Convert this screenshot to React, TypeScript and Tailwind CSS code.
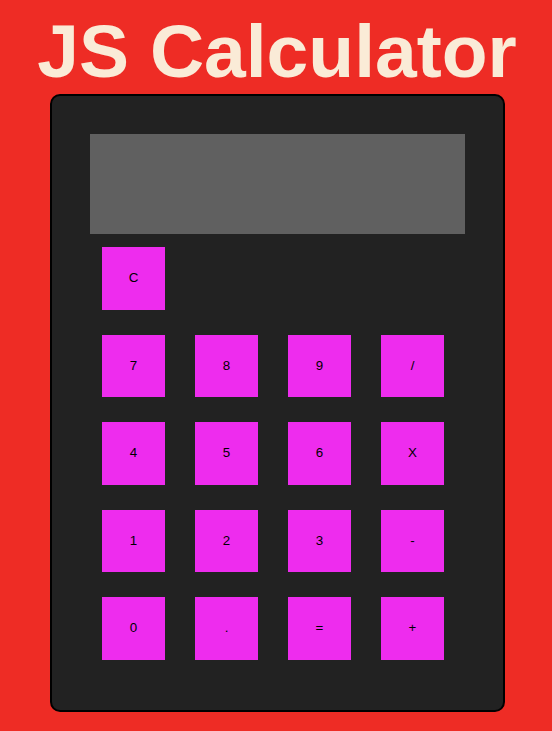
const rows: string[][] = [
  ["C"],
  ["7", "8", "9", "/"],
  ["4", "5", "6", "X"],
  ["1", "2", "3", "-"],
  ["0", ".", "=", "+"],
];

function Key({ label }: { label: string }) {
  return (
    <button
      type="button"
      className="w-[63px] h-[62.5px] bg-[#ee2cee] text-black text-[13.33px] font-['Liberation_Sans',Arial,sans-serif] flex items-center justify-center"
    >
      {label}
    </button>
  );
}

export default function App() {
  return (
    <div className="min-h-[731px] w-full bg-[#ee2c25] pt-[10px] font-['Liberation_Sans',Arial,sans-serif]">
      <h1 className="text-center text-[75px] leading-[83px] font-bold text-[#faebd7] pl-[2px]">JS Calculator</h1>
      <div className="ml-[50px] mt-px w-[455px] h-[618px] bg-[#222222] border-2 border-black rounded-[10px] p-[38px]">
        <div className="w-[375px] h-[100px] bg-[#606060]" />
        <div className="mt-[13px] pl-[12px] flex flex-col gap-[25px]">
          {rows.map((row, i) => (
            <div key={i} className="flex gap-[30px]">
              {row.map((k) => (
                <Key key={k} label={k} />
              ))}
            </div>
          ))}
        </div>
      </div>
    </div>
  );
}
